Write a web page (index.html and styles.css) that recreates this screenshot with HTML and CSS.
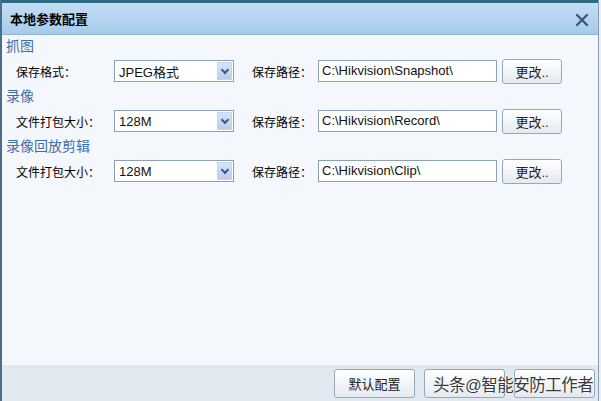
FILE: index.html
```html
<!DOCTYPE html>
<html lang="zh-CN">

<head>
  <meta charset="UTF-8">
  <title>本地参数配置</title>
  <link rel="stylesheet" href="styles.css">
</head>

<body>
  <div class="dialog">
    <div class="strip"></div>
    <div class="titlebar">
      <span class="title">本地参数配置</span>
      <svg class="close" width="14" height="14" viewBox="0 0 14 14">
        <path d="M2 2 L12 12 M12 2 L2 12" stroke="#3a5878" stroke-width="2.4" stroke-linecap="round" />
      </svg>
    </div>

    <div class="content">
      <!-- 抓图 -->
      <div class="section">抓图</div>
      <div class="row">
        <span class="label">保存格式：</span>
        <div class="select"><span>JPEG格式</span><i class="arrow"></i></div>
        <span class="label2">保存路径：</span>
        <div class="path">C:\Hikvision\Snapshot\</div>
        <div class="btn small">更改..</div>
      </div>

      <!-- 录像 -->
      <div class="section">录像</div>
      <div class="row">
        <span class="label">文件打包大小：</span>
        <div class="select"><span>128M</span><i class="arrow"></i></div>
        <span class="label2">保存路径：</span>
        <div class="path">C:\Hikvision\Record\</div>
        <div class="btn small">更改..</div>
      </div>

      <!-- 录像回放剪辑 -->
      <div class="section">录像回放剪辑</div>
      <div class="row">
        <span class="label">文件打包大小：</span>
        <div class="select"><span>128M</span><i class="arrow"></i></div>
        <span class="label2">保存路径：</span>
        <div class="path">C:\Hikvision\Clip\</div>
        <div class="btn small">更改..</div>
      </div>
    </div>

    <div class="footer">
      <div class="btn big">默认配置</div>
      <div class="btn big"></div>
      <div class="btn big"></div>
      <span class="mark">头条@智能安防工作者</span>
    </div>
  </div>
</body>

</html>
```

FILE: styles.css
```css
body {
  margin: 0;
  background-color: #e9eef4;
  font-family: 'Liberation Sans', 'Noto Sans CJK SC', sans-serif;
  font-size: 12px;
  color: #000;
}

.dialog {
  width: 596px;
  height: 401px;
  border-left: 2px solid #4a6e8e;
  border-right: 1px solid #8a9db2;
  background-color: #f4f8fc;
  display: flex;
  flex-direction: column;
}

.strip {
  height: 3px;
  background-color: #2c6b84;
}

.titlebar {
  height: 31px;
  border-bottom: 1px solid #8fb1d2;
  background: linear-gradient(#c4ddf4, #a7cbec);
  display: flex;
  align-items: center;
  justify-content: space-between;
  padding: 0 9px 0 8px;
}

.title {
  font-size: 13px;
  font-weight: bold;
}

.close {
  margin-top: 2px;
}

.content {
  flex: 1;
  padding: 2px 0 0 4px;
}

.section {
  height: 18px;
  line-height: 18px;
  font-size: 14px;
  color: #3b6ea8;
}

.row {
  height: 32px;
  display: flex;
  align-items: center;
  padding-left: 10px;
}

.label {
  width: 98px;
}

.label2 {
  width: 66px;
  margin-left: 18px;
}

.select {
  width: 120px;
  height: 22px;
  border: 1px solid #8a9fb8;
  background-color: #fff;
  display: flex;
  align-items: center;
  justify-content: space-between;
  padding-left: 4px;
  box-sizing: border-box;
  font-size: 13px;
  color: #111;
}

.arrow {
  width: 15px;
  height: 18px;
  margin-right: 1px;
  background: linear-gradient(#d8e4f6, #b9cdec);
  border: 1px solid #c6d5ec;
  box-sizing: border-box;
  position: relative;
}

.arrow:after {
  content: "";
  position: absolute;
  left: 4px;
  top: 4px;
  width: 4px;
  height: 4px;
  border-right: 2px solid #3c5a8c;
  border-bottom: 2px solid #3c5a8c;
  transform: rotate(45deg);
}

.path {
  width: 179px;
  height: 22px;
  line-height: 20px;
  border: 1px solid #8a9fb8;
  background-color: #fff;
  padding-left: 3px;
  box-sizing: border-box;
  font-size: 13px;
  color: #111;
}

.btn {
  border: 1px solid #99a8b8;
  border-radius: 3px;
  background: linear-gradient(#ffffff, #e4eaf1);
  display: flex;
  align-items: center;
  justify-content: center;
  box-sizing: border-box;
  font-size: 13px;
  color: #222;
}

.btn.small {
  width: 60px;
  height: 25px;
  margin-left: 5px;
}

.footer {
  height: 36px;
  border-top: 1px solid #f7fafd;
  background-color: #e2e8f0;
  display: flex;
  align-items: center;
  justify-content: flex-end;
  gap: 9px;
  padding-right: 3px;
  position: relative;
}

.btn.big {
  width: 81px;
  height: 29px;
}

.mark {
  position: absolute;
  left: 431px;
  top: 7px;
  font-size: 16.5px;
  color: #3a3a3a;
  letter-spacing: -0.5px;
  text-shadow: 0 0 2px #fff, 0 0 1px #fff;
}
```
